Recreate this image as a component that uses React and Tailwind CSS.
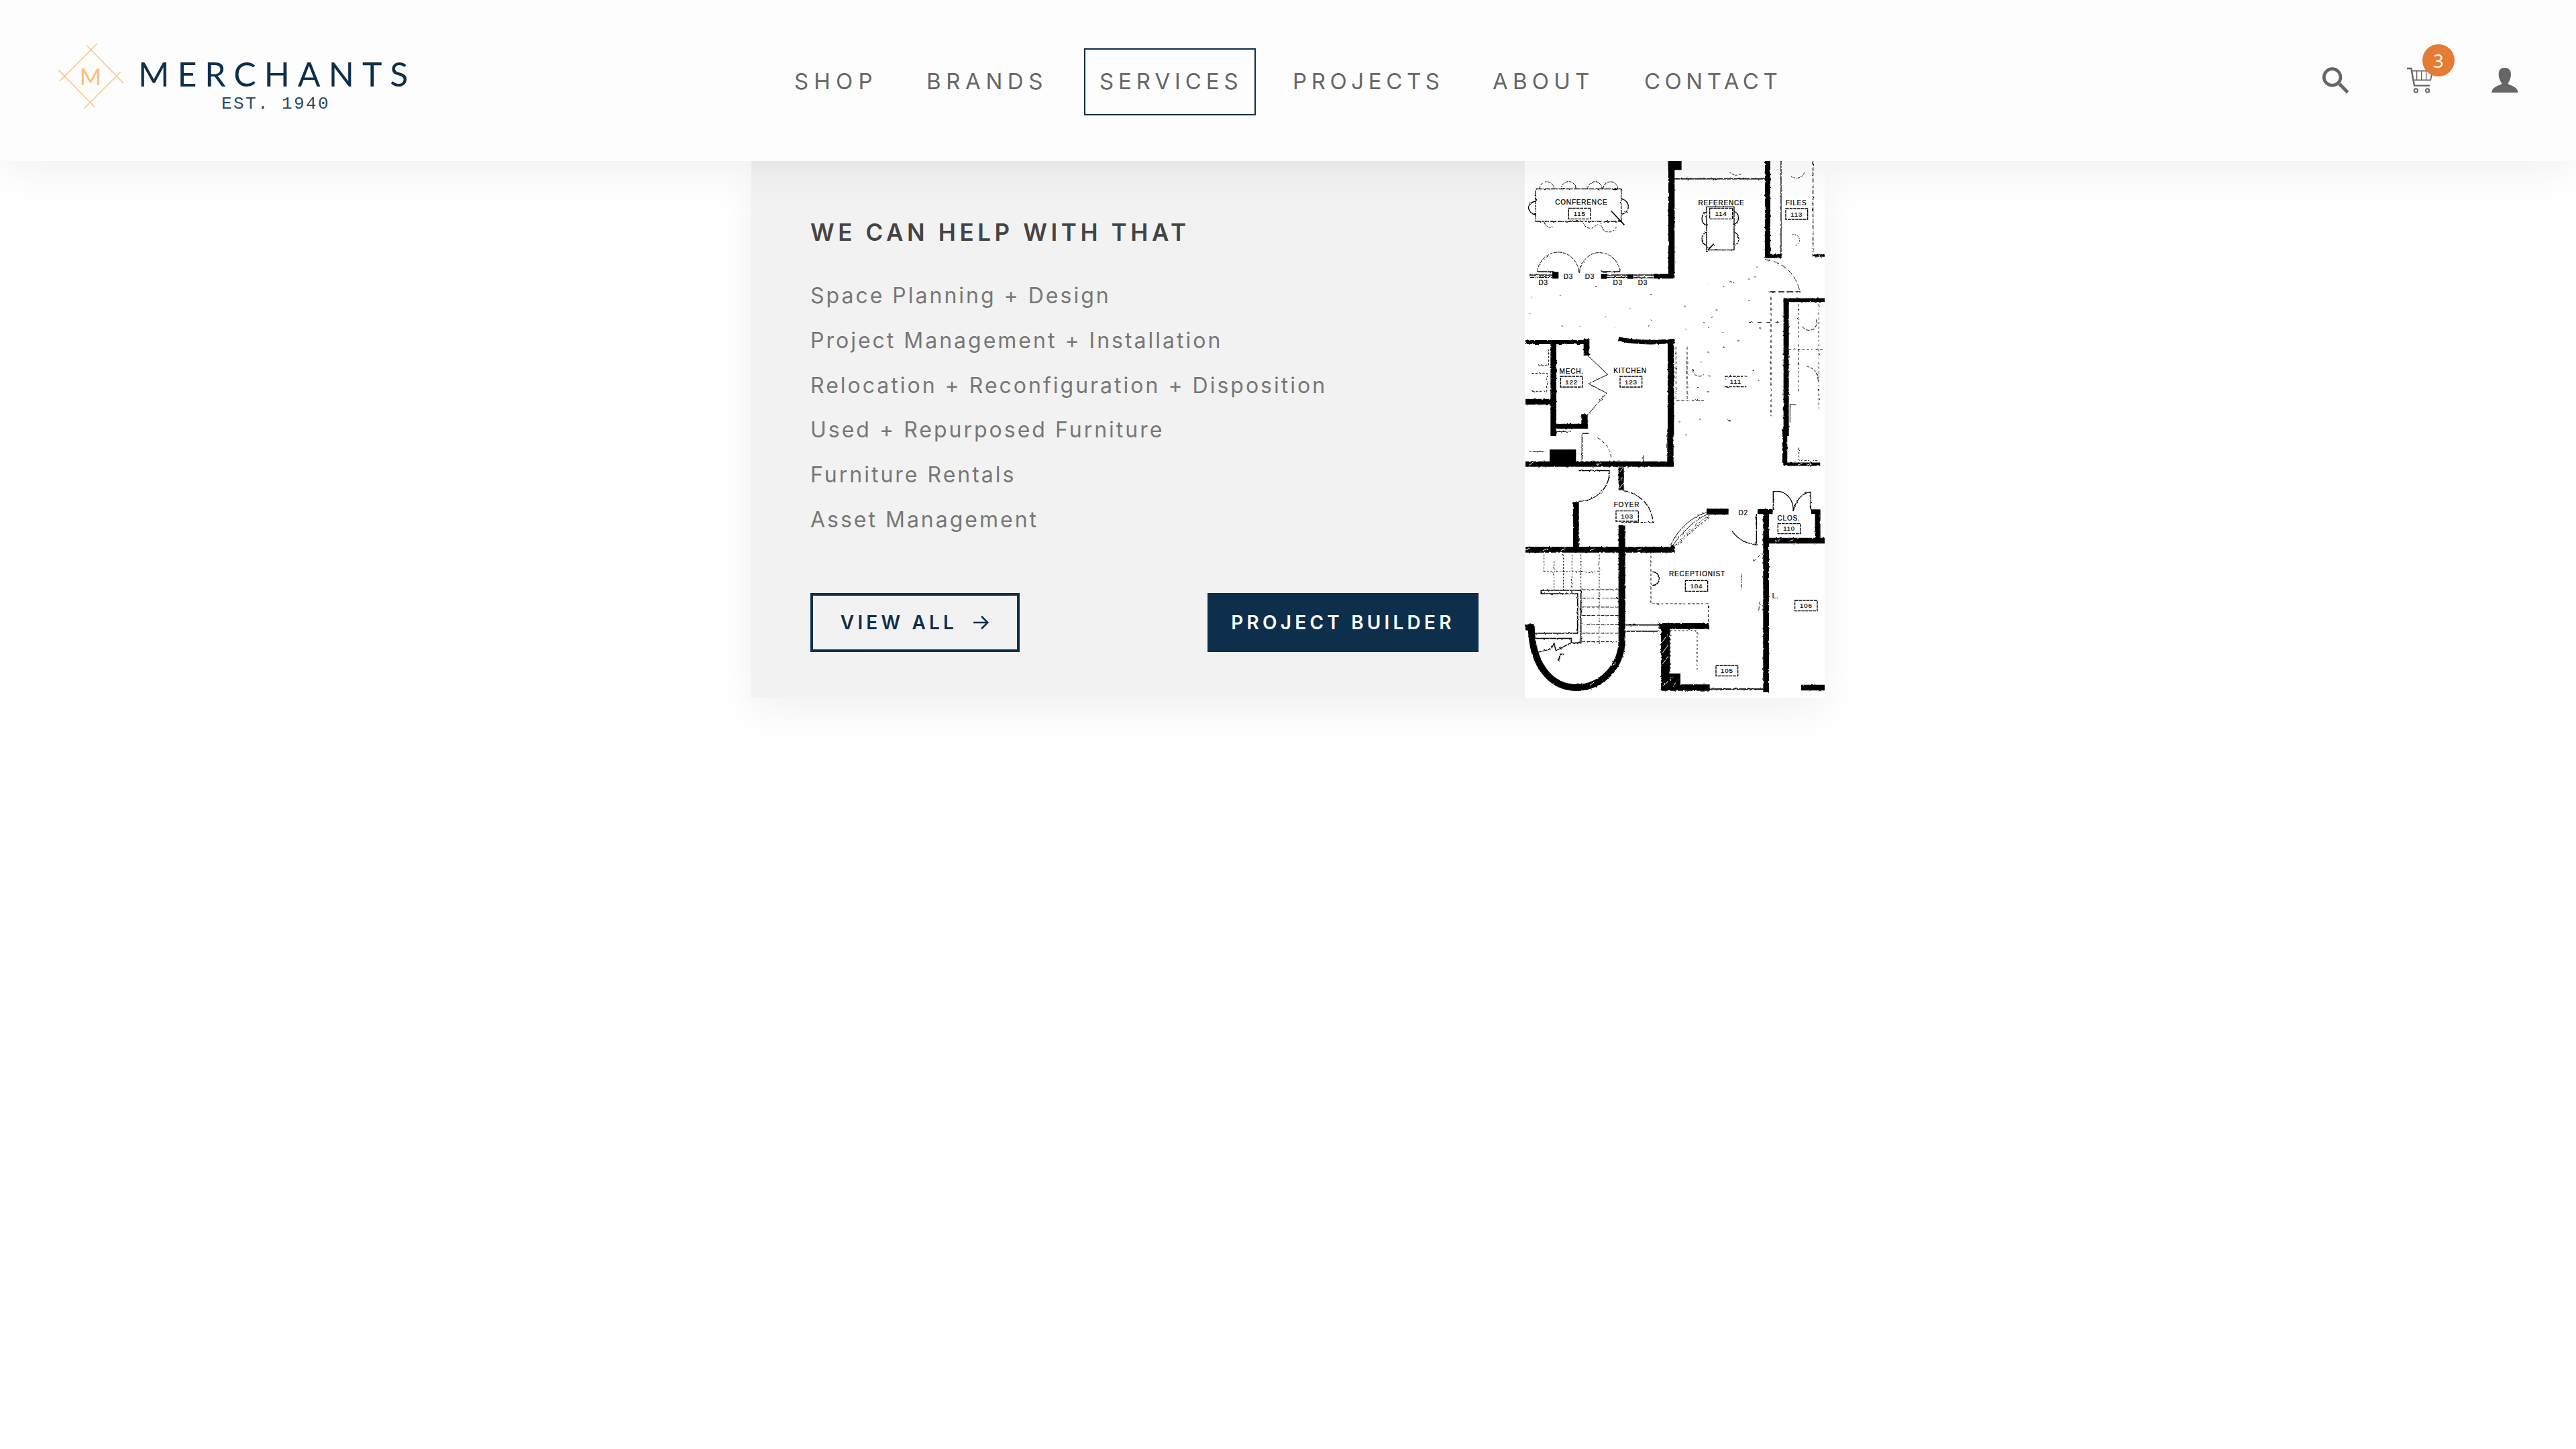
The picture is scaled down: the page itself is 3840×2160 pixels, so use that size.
const W = ({ d, w = 20, c = "#000", dash }) => (
  <path d={d} fill="none" stroke={c} strokeWidth={w} strokeDasharray={dash} filter="url(#rough)" />
);
const T = ({ x, y, s = 30, children }) => (
  <text x={x} y={y} fontSize={s} textAnchor="middle" fill="#000" stroke="#000" strokeWidth="0.7" fontFamily="'Liberation Sans', sans-serif" letterSpacing="2.5">
    {children}
  </text>
);
const Box = ({ x, y, w = 98, h = 48, t }) => (
  <g>
    <rect x={x} y={y} width={w} height={h} fill="none" stroke="#000" strokeWidth="4" strokeDasharray="14 3" />
    <T x={x + w / 2} y={y + h - 13} s={29}>{t}</T>
  </g>
);

const specks = [];
let seed = 7;
const rnd = () => ((seed = (seed * 16807) % 2147483647) / 2147483647);
for (let i = 0; i < 32; i++) {
  const x = 730 + rnd() * 380;
  const y = 460 + rnd() * 800;
  specks.push(`M${x.toFixed(0)} ${y.toFixed(0)}h${(2 + rnd() * 8).toFixed(0)}`);
}
for (let i = 0; i < 12; i++) {
  const x = 60 + rnd() * 600;
  const y = 590 + rnd() * 200;
  specks.push(`M${x.toFixed(0)} ${y.toFixed(0)}h${(2 + rnd() * 6).toFixed(0)}`);
}

function FloorPlan() {
  return (
    <svg viewBox="2273 240 447 800" className="block w-[447px] h-[800px] bg-white">
      <defs>
        <filter id="rough" filterUnits="userSpaceOnUse" x="-100" y="-100" width="1700" height="1500">
          <feTurbulence type="fractalNoise" baseFrequency="0.09" numOctaves="2" seed="4" />
          <feDisplacementMap in="SourceGraphic" scale="9" />
        </filter>
      </defs>
      <g transform="translate(2260 230) scale(0.3333)">
        {/* upper walls */}
        <W d="M695 30V555" w={28} />
        <rect x="680" y="30" width="60" height="40" />
        <W d="M615 545H705" w={22} />
        <W d="M1125 30V465" w={24} />
        <W d="M1115 455H1187" w={18} />
        <W d="M705 110H1115" w={5} />
        <W d="M1185 30V450" w={4} />
        <W d="M1328 30V450" w={4} dash="18 8" />
        <W d="M1325 453H1380" w={10} dash="30 3" />
        {/* conference */}
        <W d="M88 155H470V300H88Z" w={4} dash="30 4" />
        <W d="M105 155A32 32 0 0 1 170 155M202 155A32 32 0 0 1 268 155M320 155A32 32 0 0 1 385 155M390 155A32 32 0 0 1 455 155" w={3} dash="14 4" />
        <W d="M468 200A34 34 0 0 1 468 268M90 210A36 36 0 0 0 55 240A36 36 0 0 0 90 270" w={4} />
        <W d="M125 300A30 30 0 0 0 165 325M300 300A32 32 0 0 0 362 310M382 300A34 34 0 0 0 448 325" w={3} dash="12 5" />
        <W d="M424 252L484 316" w={5} />
        <T x={292} y={224}>CONFERENCE</T>
        <Box x={235} y={241} t="115" />
        {/* reference */}
        <T x={918} y={227}>REFERENCE</T>
        <W d="M852 235H975V428H852Z" w={4} />
        <Box x={866} y={241} w={102} t="114" />
        <W d="M852 258A32 32 0 0 0 852 318M852 348A32 32 0 0 0 852 408M975 255A32 32 0 0 1 975 314M975 348A32 32 0 0 1 975 408" w={4} />
        <W d="M885 400L850 436" w={5} />
        {/* files */}
        <T x={1253} y={227}>FILES</T>
        <Box x={1206} y={243} t="113" />
        <W d="M1230 100A40 40 0 0 0 1290 80" w={3} dash="10 5" />
        <W d="M955 80A40 40 0 0 0 1010 85" w={3} dash="10 5" />
        <W d="M1235 360A25 25 0 1 1 1250 408" w={3} dash="6 6" />
        {/* D3 doors */}
        <W d="M60 540H160M60 550H160M400 540H500M400 550H500M525 540H615M525 552H615" w={4} />
        <rect x="162" y="526" width="28" height="30" />
        <rect x="380" y="535" width="26" height="22" />
        <rect x="498" y="537" width="26" height="20" />
        <W d="M95 525H170M380 525H465" w={4} />
        <W d="M95 525C100 470 150 435 195 438C240 442 275 475 283 530M283 530C290 475 330 438 375 440C425 442 460 480 465 525" w={3} dash="16 4" />
        <T x={122} y={585}>D3</T>
        <T x={234} y={557}>D3</T>
        <T x={330} y={557}>D3</T>
        <T x={455} y={585}>D3</T>
        <T x={567} y={585}>D3</T>
        <W d="M1115 472C1190 480 1250 530 1268 610" w={3} dash="26 12" />
        <W d="M1130 615H1272" w={4} dash="30 10" />
        {/* mech, kitchen */}
        <W d="M42 840H325" w={18} />
        <W d="M167 835V1260" w={26} />
        <W d="M315 825V900" w={26} />
        <W d="M42 1107H165" w={26} />
        <W d="M170 1216H320" w={22} />
        <W d="M306 1162V1226" w={28} />
        <W d="M458 826C510 838 600 845 710 835" w={20} />
        <W d="M692 830V1260" w={28} />
        <W d="M1196 652H1380" w={17} />
        <W d="M1208 650V1260" w={24} />
        <W d="M315 895L410 985L325 1026L405 1068L320 1165" w={3} />
        <W d="M145 870V945H100M70 980H140V1060H70" w={3} dash="10 6" />
        <T x={248} y={980}>MECH.</T>
        <Box x={199} y={993} t="122" />
        <T x={510} y={979}>KITCHEN</T>
        <Box x={465} y={993} t="123" />
        <W d="M933 993H1030M933 1040H1030" w={4} dash="14 4" />
        <T x={982} y={1026} s={29}>111</T>
        <W d="M715 860V1100H840M765 860V1100" w={3} dash="14 8" />
        <W d="M1262 670V1060M1354 670V1140M1220 872H1370" w={3} dash="10 10" />
        <W d="M1140 640V1170" w={4} dash="10 14" />
        <W d="M1040 752H1175" w={3} dash="18 22" />
        <W d="M1280 770A30 30 0 0 0 1340 735M790 960A30 30 0 0 0 840 985" w={3} dash="16 6" />
        <W d="M1300 950A56 56 0 0 1 1350 1010" w={3} dash="12 6" />
        <W d="M1225 1118H1250M1225 1118V1200" w={3} />
        <W d={specks.join("")} w={3} />
      </g>
      <g transform="translate(2260 640) scale(0.3333)">
        <W d="M42 155H705" w={24} />
        <rect x="150" y="90" width="118" height="65" />
        <W d="M690 0V165" w={28} />
        <W d="M1202 0V150" w={22} />
        <W d="M1195 156H1360" w={15} />
        <W d="M295 20V145M295 18H325" w={4} />
        <W d="M570 115V145M60 100H130M175 10H245" w={3} />
        <W d="M365 38C400 60 425 90 425 130" w={3} dash="14 10" />
        <W d="M1265 85V140H1350" w={3} dash="10 6" />
        <W d="M280 185H417C420 260 360 320 280 322" w={4} />
        <W d="M268 325V530" w={26} />
        <W d="M470 170V272" w={24} />
        <W d="M480 275C550 285 608 340 612 416H470" w={4} dash="26 8" />
        <T x={495} y={348}>FOYER</T>
        <Box x={447} y={365} w={100} h={46} t="103" />
        <W d="M473 428V530" w={30} />
        <W d="M42 538H710" w={26} />
        <W d="M473 530V930C478 1060 380 1155 270 1155C160 1155 70 1060 68 880" w={30} />
        <W d="M42 885H80" w={28} />
        <W d="M705 520L690 535" w={14} />
        <W d="M692 518C720 450 790 385 860 370M700 520C740 465 800 400 862 378" w={3} />
        <W d="M710 520C760 470 820 410 865 385M720 520C770 470 825 420 868 392" w={3} dash="12 6" />
        <W d="M852 368H950" w={26} />
        <T x={1016} y={385}>D2</T>
        <W d="M966 455C990 490 1030 512 1075 515V378" w={4} />
        <W d="M1080 368H1148" w={22} />
        <W d="M1118 368V1175" w={26} />
        <W d="M1150 360V278H1180C1220 290 1240 320 1240 365M1240 365C1250 320 1280 282 1318 280V360" w={4} />
        <W d="M1320 368H1360" w={20} />
        <W d="M1349 362V490" w={24} />
        <W d="M1118 498H1380" w={26} />
        <T x={1220} y={408}>CLOS.</T>
        <Box x={1171} y={422} w={101} h={45} t="110" />
        {/* stairs */}
        <W d="M112 720H290V955H247V935H78V912H275V735H112Z" w={5} />
        <W d="M295 717H460M295 755H460M295 795H460M295 833H460M295 872H460M295 912H460M295 950H460" w={3} dash="16 5" />
        <W d="M372 560V960M125 560V640M170 590V720M212 560V720M250 560V720M290 560V720M125 637H372" w={3} dash="8 6" />
        <W d="M85 1000L158 982L170 955L178 990L245 955" w={4} />
        <W d="M190 1035L197 1006H214" w={5} />
        {/* receptionist */}
        <W d="M603 545V780H860V865" w={3} dash="12 8" />
        <W d="M610 637A30 30 0 0 1 610 698" w={4} />
        <T x={810} y={658}>RECEPTIONIST</T>
        <Box x={757} y={676} w={100} h={48} t="104" />
        <Box x={1247} y={765} w={100} h={47} t="106" />
        <Box x={894} y={1056} w={98} h={47} t="105" />
        <T x={1160} y={755}>L.</T>
        <W d="M490 875H640M490 903H640" w={5} />
        <W d="M640 880H864" w={26} />
        <W d="M668 872V1165" w={40} />
        <W d="M650 1155H866" w={28} />
        <rect x="680" y="1092" width="55" height="60" />
        <W d="M866 1162H1105" w={6} />
        <W d="M1275 1155H1380" w={26} />
        <W d="M690 900H810V1085M690 900V1085" w={3} dash="8 10" />
        <W d="M1008 645V720M1062 590L1105 550M1085 810L1090 770" w={3} dash="18 6" />
        {/* hatching */}
        <W d="M655 950L680 915M655 1000L680 965M655 1050L680 1015M655 1150L700 1110M700 1150L725 1120M40 540L60 532M120 542L140 534M200 542L220 534M330 542L350 534M540 542L560 534M60 158L80 150M360 158L380 150M1260 160L1280 152M1300 160L1320 152M464 190L476 175M464 230L476 215M464 262L476 245M1160 502L1180 494M1220 502L1240 494M150 1150L170 1135M330 1145L350 1130M430 1060L445 1040" w={3} c="#fff" />
      </g>
    </svg>
  );
}

function Logo() {
  return (
    <div className="w-[1161px] pl-[87px] flex items-start mb-[10px]">
      <svg viewBox="87 66 100 100" className="w-[100px] h-[100px] shrink-0">
        <g stroke="#fdc48a" strokeWidth="1.6" fill="none">
          <path d="M129.5 69L184 125M145 66L89 122M87 105L141.5 161M180 108L125 163" />
        </g>
        <text x="135" y="128" textAnchor="middle" fontSize="35" fontWeight="400" fill="#fdbf7c" fontFamily="Lato, sans-serif">M</text>
      </svg>
      <div className="ml-[19px] mt-[26px] w-[410px] text-[#0d2f4c]">
        <div className="font-['Lato',sans-serif] text-[50px] leading-[38px] tracking-[12px] whitespace-nowrap">MERCHANTS</div>
        <div className="mt-[17px] text-center text-[#2b4a63] font-['Liberation_Mono',monospace] text-[26px] leading-[18px] tracking-[2.4px] whitespace-nowrap">EST. 1940</div>
      </div>
    </div>
  );
}

const navItems = [
  { n: "SHOP", c: "w-[165px] tracking-[8.2px] border-transparent" },
  { n: "BRANDS", c: "w-[226px] tracking-[7.6px] border-transparent" },
  { n: "SERVICES", c: "w-[256px] tracking-[6.9px] border-[#0d2f4c]" },
  { n: "PROJECTS", c: "w-[266px] tracking-[6.6px] border-transparent" },
  { n: "ABOUT", c: "w-[194px] tracking-[7.2px] border-transparent" },
  { n: "CONTACT", c: "w-[247px] tracking-[6.5px] border-transparent" },
];

function Icons() {
  return (
    <div className="ml-auto pr-[86px] flex items-center gap-[86px]">
      <svg viewBox="186 180 120 120" className="w-10 h-10">
        <circle cx="230" cy="225" r="37" fill="none" stroke="#666" strokeWidth="14" />
        <path d="M262 255L299 293" stroke="#666" strokeWidth="15" fill="none" />
      </svg>
      <div className="relative w-10 h-10">
        <svg viewBox="565 182 120 120" className="w-10 h-10">
          <g fill="none" stroke="#666">
            <path d="M565 188H584L598 265H668" strokeWidth="7" />
            <path d="M586 199H678L671 240H593Z" strokeWidth="5" />
            <path d="M609 199V240M630 199V240M651 199V240" strokeWidth="4" />
            <circle cx="605" cy="287" r="8" strokeWidth="6" />
            <circle cx="657" cy="287" r="8" strokeWidth="6" />
          </g>
        </svg>
        <span className="absolute left-[23px] top-[-34px] w-12 h-12 rounded-full bg-[#e47c35] text-white flex items-center justify-center font-['Open_Sans',sans-serif] text-[27px] leading-none">3</span>
      </div>
      <svg viewBox="941 182 120 120" className="w-10 h-10">
        <path d="M1000 185C1020 185 1028 198 1028 215C1028 232 1020 248 1014 256C1024 264 1058 268 1060 296H942C944 268 978 264 988 256C982 248 973 232 973 215C973 198 980 185 1000 185Z" fill="#666" />
      </svg>
    </div>
  );
}

const services = [
  "Space Planning + Design",
  "Project Management + Installation",
  "Relocation + Reconfiguration + Disposition",
  "Used + Repurposed Furniture",
  "Furniture Rentals",
  "Asset Management",
];

export default function App() {
  return (
    <div className="min-h-[2160px] bg-white font-['Inter',sans-serif]">
      <header className="relative z-10 h-[240px] bg-[#fdfdfd] shadow-[0_15px_60px_rgba(0,0,0,0.06)] flex items-center">
        <Logo />
        <nav className="flex gap-[32px] mt-1">
          {navItems.map(({ n, c }) => (
            <a
              key={n}
              className={"h-[100px] pl-[21px] border-2 flex items-center text-[33px] text-[#666] whitespace-nowrap " + c}
            >
              {n}
            </a>
          ))}
        </nav>
        <Icons />
      </header>
      <section className="w-[1600px] mx-auto flex shadow-[0_20px_60px_rgba(0,0,0,0.057)]">
        <div className="w-[1153px] bg-[#f2f2f2] pl-[88px] pr-[69px] pt-[86px]">
          <h2 className="text-[35px] leading-[40px] font-semibold tracking-[5.6px] text-[#444]">WE CAN HELP WITH THAT</h2>
          <ul className="mt-[42px] text-[32px] leading-[66.8px] tracking-[3px] text-[#777]">
            {services.map((s) => (
              <li key={s}>{s}</li>
            ))}
          </ul>
          <div className="mt-[75px] flex justify-between">
            <a className="w-[312px] h-[88px] border-4 border-[#0d2f4c] flex items-center justify-center gap-[22px] text-[28px] font-semibold tracking-[5.2px] text-[#0d2f4c]">
              VIEW ALL
              <svg viewBox="0 0 24 24" className="w-[26px] h-[26px]" fill="none" stroke="#0d2f4c" strokeWidth="2.4">
                <path d="M2 12H21M13 3.5L21.5 12L13 20.5" />
              </svg>
            </a>
            <a className="w-[404px] h-[88px] bg-[#0d2f4c] flex items-center justify-center text-[28px] font-semibold tracking-[5.2px] text-white">
              PROJECT BUILDER
            </a>
          </div>
        </div>
        <FloorPlan />
      </section>
    </div>
  );
}
